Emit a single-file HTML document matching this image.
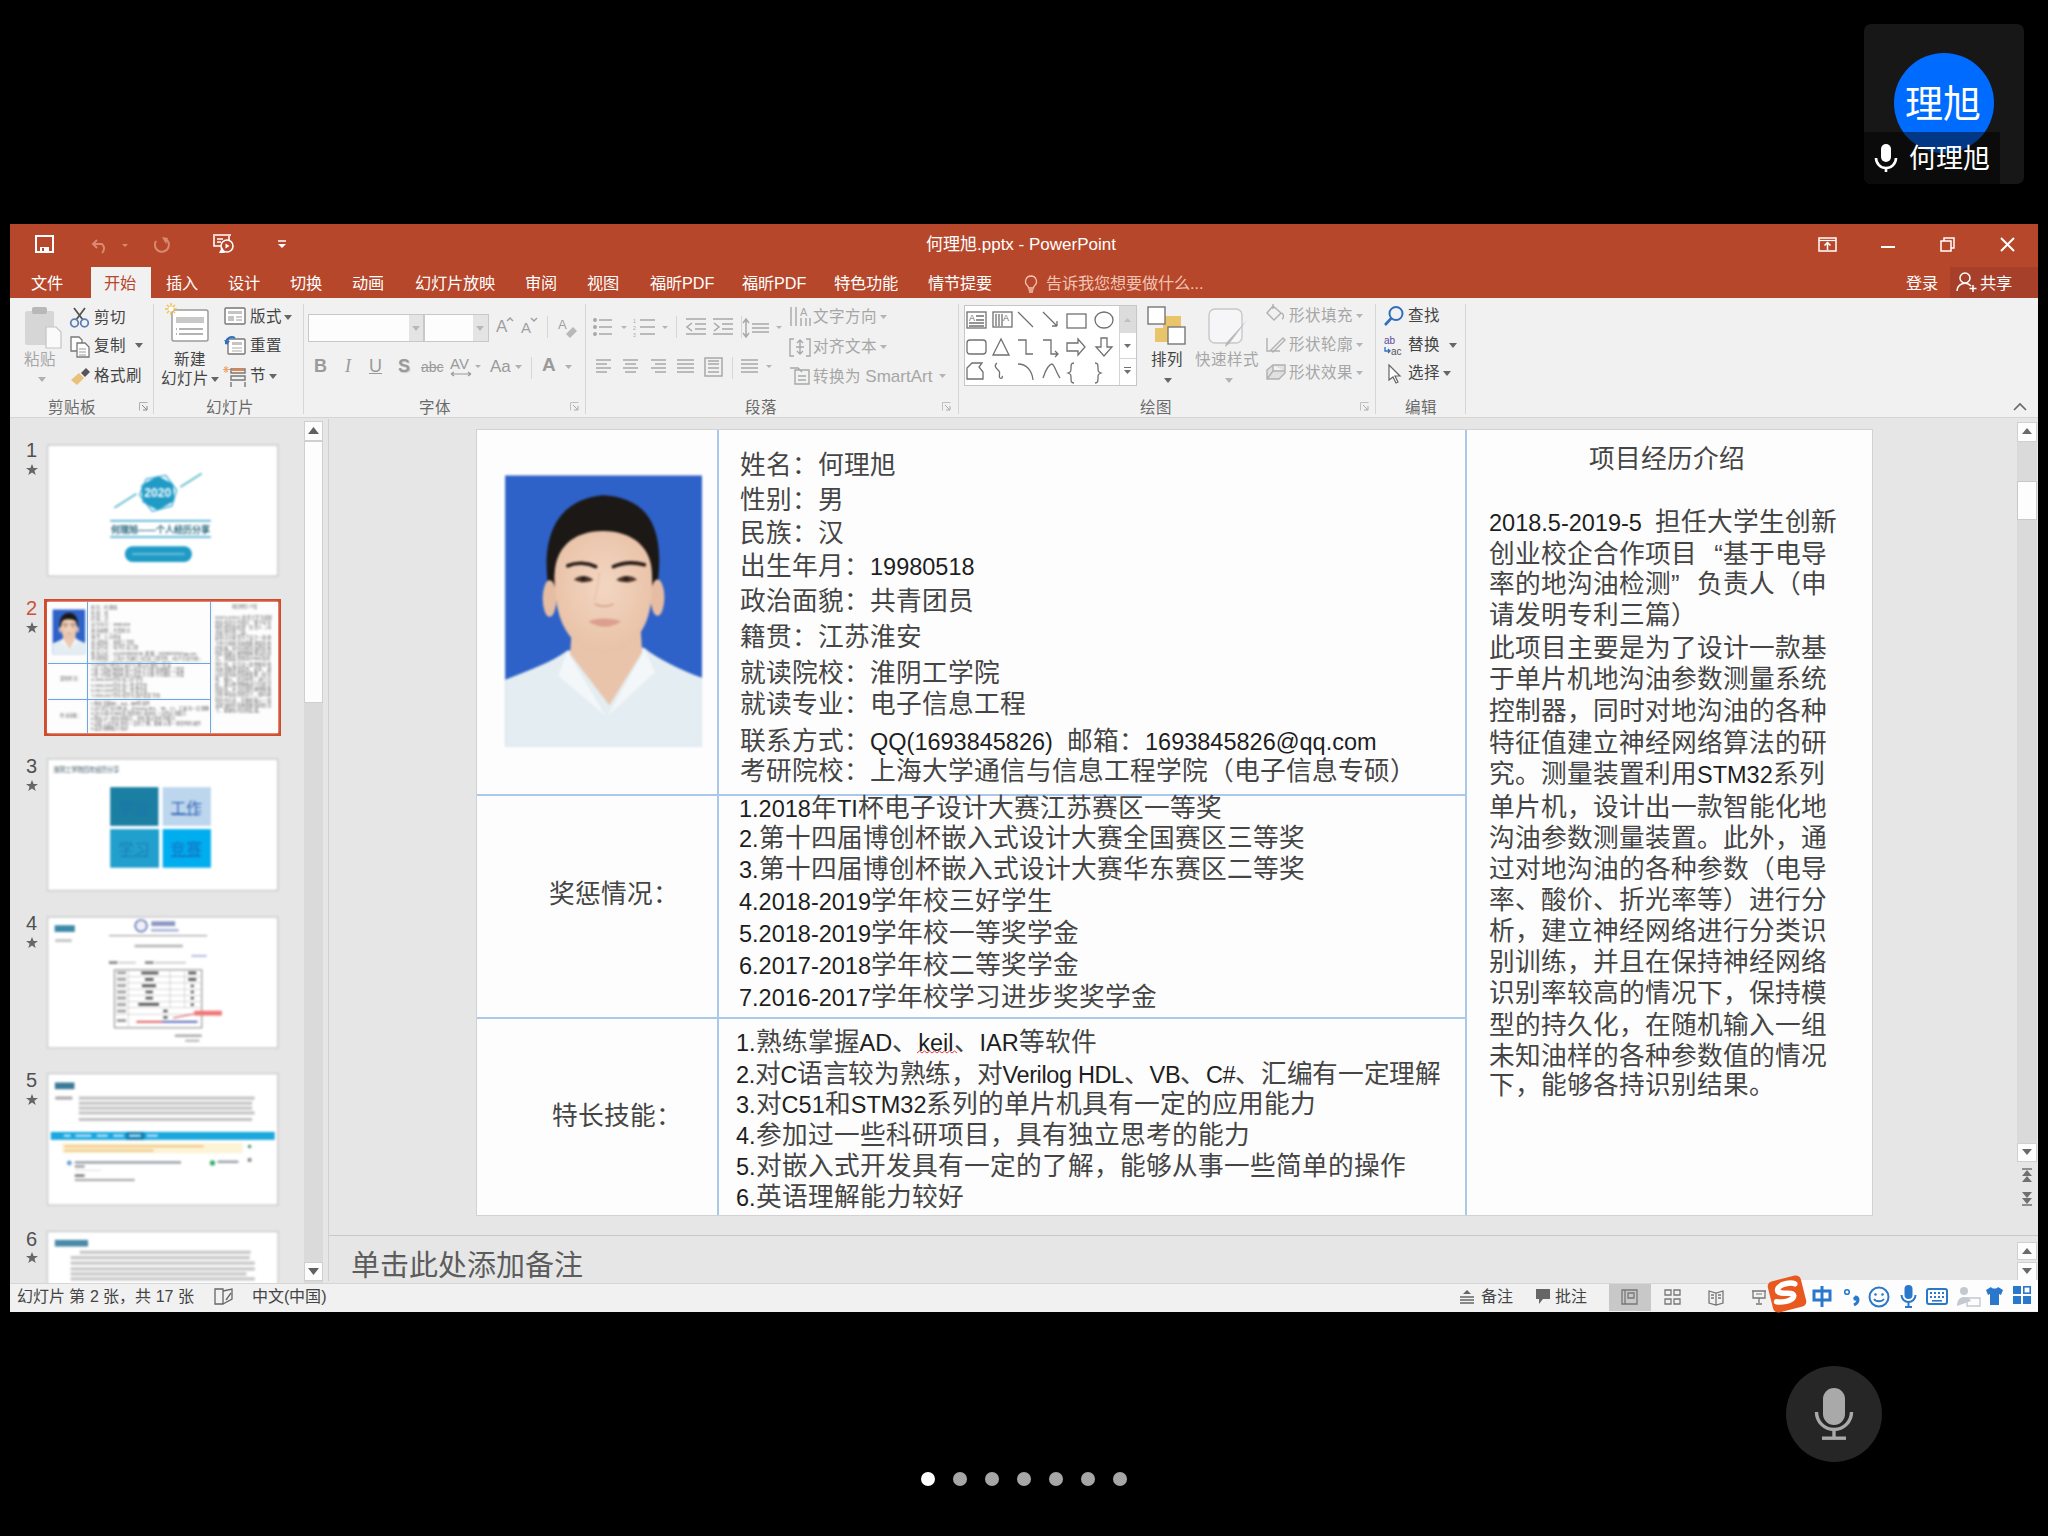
<!DOCTYPE html>
<html lang="zh-CN"><head><meta charset="utf-8">
<style>
*{margin:0;padding:0;box-sizing:border-box}
html,body{width:2048px;height:1536px;overflow:hidden;background:#000;font-family:"Liberation Sans",sans-serif;position:relative}
.a{position:absolute}
.t{position:absolute;white-space:nowrap;line-height:1}
svg{position:absolute;overflow:visible}
.tab{color:#fff;font-size:16.2px}
.rb{color:#444;font-size:15.5px}
.dis{color:#a6a6a6}
.gl{color:#6a6a6a;font-size:15.5px}
.sep{position:absolute;width:1px;background:#d6d6d6}
.sl{color:#454545;font-size:25.7px}
.sl b{font-weight:normal;font-size:23.5px;color:#1e1e1e}
.num{color:#555;font-size:20px}
.star{color:#666;font-size:13px}
.th{position:absolute;background:#fff;border:1px solid #c8c8c8;overflow:hidden}
.rep .t{opacity:.85}
</style></head><body>
<!-- avatar card -->
<div class="a" style="left:1864px;top:24px;width:160px;height:160px;background:#171717;border-radius:7px;overflow:hidden">
  <div class="a" style="left:0;top:108px;width:136px;height:52px;background:#0b0b0b"></div>
  <div class="a" style="left:30px;top:29px;width:100px;height:100px;border-radius:50%;background:#006cff"></div>
  <div class="t" style="left:41px;top:61px;color:#fff;font-size:38px">理旭</div>
  <div class="a" style="left:0;top:108px;width:136px;height:52px;overflow:hidden"><div class="a" style="left:30px;top:-79px;width:100px;height:100px;border-radius:50%;background:rgba(0,0,0,0.48)"></div></div>
  <div class="t" style="left:45px;top:122px;color:#fff;font-size:27px">何理旭</div>
  <svg style="left:10px;top:120px" width="24" height="28" viewBox="0 0 24 28"><rect x="7" y="0" width="10" height="18" rx="5" fill="#fff"/><path d="M2 14 a10 10 0 0 0 20 0" stroke="#fff" stroke-width="2.6" fill="none"/><rect x="10.7" y="23" width="2.6" height="5" fill="#fff"/></svg>
</div>
<!-- window bg -->
<div class="a" style="left:10px;top:224px;width:2028px;height:1088px;background:#e6e6e6"></div>
<div class="a" style="left:10px;top:224px;width:2028px;height:74px;background:#b7472a"></div>
<div class="a" style="left:10px;top:298px;width:2028px;height:120px;background:#f1f1f1;border-bottom:1px solid #d4d4d4"></div>
<div class="a" style="left:328px;top:419px;width:1px;height:862px;background:#d0d0d0"></div>
<div class="a" style="left:329px;top:1235px;width:1709px;height:1px;background:#c8c8c8"></div>
<div class="a" style="left:10px;top:1283px;width:2028px;height:29px;background:#f1f1f1;border-top:1px solid #d6d6d6"></div>

<!-- page dots -->
<div class="a" style="left:921px;top:1472px;width:14px;height:14px;border-radius:50%;background:#fff"></div>
<div class="a" style="left:953px;top:1472px;width:14px;height:14px;border-radius:50%;background:#a6a6a6"></div>
<div class="a" style="left:985px;top:1472px;width:14px;height:14px;border-radius:50%;background:#a6a6a6"></div>
<div class="a" style="left:1017px;top:1472px;width:14px;height:14px;border-radius:50%;background:#a6a6a6"></div>
<div class="a" style="left:1049px;top:1472px;width:14px;height:14px;border-radius:50%;background:#a6a6a6"></div>
<div class="a" style="left:1081px;top:1472px;width:14px;height:14px;border-radius:50%;background:#a6a6a6"></div>
<div class="a" style="left:1113px;top:1472px;width:14px;height:14px;border-radius:50%;background:#a6a6a6"></div>

<!-- mic button -->
<div class="a" style="left:1786px;top:1366px;width:96px;height:96px;border-radius:50%;background:#262626"></div>
<svg style="left:1810px;top:1388px" width="48" height="54" viewBox="0 0 48 54"><rect x="13" y="0" width="22" height="37" rx="11" fill="#a9a9a9"/><path d="M6.5 24 a17.5 17.5 0 0 0 35 0" stroke="#a9a9a9" stroke-width="3.4" fill="none"/><rect x="22.3" y="41" width="3.4" height="8" fill="#a9a9a9"/><rect x="12" y="48.5" width="24" height="3.4" fill="#a9a9a9"/></svg>
<!-- QAT -->
<svg style="left:35px;top:235px" width="19" height="18" viewBox="0 0 19 18"><path d="M1 1h17v16H1z" fill="none" stroke="#fff" stroke-width="2"/><rect x="3" y="2" width="13" height="8" fill="#b7472a"/><rect x="5" y="12" width="9" height="5" fill="#fff"/><rect x="7" y="13" width="2" height="3" fill="#b7472a"/></svg>
<svg style="left:91px;top:236px" width="40" height="18" viewBox="0 0 40 18"><path d="M6 4 L2 8 L6 12 M2 8 H11 a6 6 0 0 1 0 9" fill="none" stroke="#d98a73" stroke-width="2"/><path d="M31 8 l3 3 l3 -3z" fill="#d98a73"/></svg>
<svg style="left:152px;top:236px" width="20" height="18" viewBox="0 0 20 18"><path d="M4 5 A7 7 0 1 0 15 4" fill="none" stroke="#d98a73" stroke-width="2"/><path d="M10 1 l6 1 l-2 6z" fill="#d98a73"/></svg>
<svg style="left:211px;top:234px" width="24" height="20" viewBox="0 0 24 20"><path d="M2 1h18M3 2v10h15V2" fill="none" stroke="#fff" stroke-width="1.6"/><path d="M6 5h6M6 8h4" stroke="#fff" stroke-width="1.4"/><circle cx="16" cy="12" r="6" fill="#b7472a" stroke="#fff" stroke-width="1.6"/><path d="M14.5 9.5 l4 2.5 -4 2.5z" fill="#fff"/><path d="M8 19 l3-6 3 6z" fill="#fff"/></svg>
<svg style="left:277px;top:239px" width="10" height="10" viewBox="0 0 10 10"><path d="M1 2h8" stroke="#fff" stroke-width="1.5"/><path d="M1 5h8l-4 4z" fill="#fff"/></svg>
<div class="t" style="left:926px;top:236px;color:#fff;font-size:17px">何理旭.pptx - PowerPoint</div>
<!-- window controls -->
<svg style="left:1818px;top:237px" width="19" height="15" viewBox="0 0 19 15"><rect x="1" y="1" width="17" height="13" fill="none" stroke="#fff" stroke-width="1.5"/><path d="M1 3.5h17" stroke="#fff" stroke-width="1.2"/><path d="M9.5 13V6M6.5 8.5l3-3 3 3" fill="none" stroke="#fff" stroke-width="1.5"/></svg>
<div class="a" style="left:1881px;top:246px;width:14px;height:2px;background:#fff"></div>
<svg style="left:1940px;top:237px" width="15" height="15" viewBox="0 0 15 15"><rect x="1" y="4" width="10" height="10" fill="none" stroke="#fff" stroke-width="1.5"/><path d="M4 4V1h10v10h-3" fill="none" stroke="#fff" stroke-width="1.5"/></svg>
<svg style="left:2000px;top:237px" width="15" height="15" viewBox="0 0 15 15"><path d="M1 1L14 14M14 1L1 14" stroke="#fff" stroke-width="2"/></svg>
<!-- tabs -->
<div class="a" style="left:91px;top:267px;width:60px;height:31px;background:#f1f1f1"></div>
<div class="t tab" style="left:31px;top:275px">文件</div>
<div class="t tab" style="left:104px;top:275px;color:#b7472a">开始</div>
<div class="t tab" style="left:166px;top:275px">插入</div>
<div class="t tab" style="left:228px;top:275px">设计</div>
<div class="t tab" style="left:290px;top:275px">切换</div>
<div class="t tab" style="left:352px;top:275px">动画</div>
<div class="t tab" style="left:415px;top:275px">幻灯片放映</div>
<div class="t tab" style="left:525px;top:275px">审阅</div>
<div class="t tab" style="left:587px;top:275px">视图</div>
<div class="t tab" style="left:650px;top:275px">福昕PDF</div>
<div class="t tab" style="left:742px;top:275px">福昕PDF</div>
<div class="t tab" style="left:834px;top:275px">特色功能</div>
<div class="t tab" style="left:928px;top:275px">情节提要</div>
<svg style="left:1024px;top:275px" width="14" height="18" viewBox="0 0 14 18"><path d="M7 1a5.5 5.5 0 0 0-3.5 9.7c.8.7 1 1.5 1 2.3h5c0-.8.2-1.6 1-2.3A5.5 5.5 0 0 0 7 1z" fill="none" stroke="#f2c2b2" stroke-width="1.3"/><path d="M4.5 15h5M5 17h4" stroke="#f2c2b2" stroke-width="1.3"/></svg>
<div class="t tab" style="left:1046px;top:275px;color:#f0c4b5">告诉我您想要做什么...</div>
<div class="t tab" style="left:1906px;top:275px">登录</div>
<div class="a" style="left:1950px;top:267px;width:88px;height:31px;background:#a6402a"></div>
<svg style="left:1956px;top:271px" width="22" height="22" viewBox="0 0 22 22"><circle cx="9" cy="7" r="5" fill="none" stroke="#fff" stroke-width="1.5"/><path d="M1 20a8 8 0 0 1 14-5" fill="none" stroke="#fff" stroke-width="1.5"/><path d="M17 14v7M13.5 17.5h7" stroke="#fff" stroke-width="1.5"/></svg>
<div class="t tab" style="left:1980px;top:275px">共享</div>
<!-- ===== ribbon: clipboard ===== -->
<svg style="left:22px;top:305px" width="42" height="45" viewBox="0 0 42 45"><rect x="3" y="6" width="29" height="34" rx="2" fill="#d6d6d6"/><rect x="10" y="2" width="15" height="7" rx="2" fill="#b8b8b8"/><path d="M24 22h10l5 5v16H24z" fill="#fafafa" stroke="#c4c4c4" stroke-width="1.2"/></svg>
<div class="t rb dis" style="left:24px;top:352px">粘贴</div>
<svg style="left:38px;top:377px" width="8" height="5" viewBox="0 0 8 5"><path d="M0 0h8l-4 5z" fill="#b0b0b0"/></svg>
<svg style="left:69px;top:307px" width="21" height="21" viewBox="0 0 21 21"><path d="M5 1l9 12M16 1L7 13" stroke="#555" stroke-width="1.8"/><circle cx="5.5" cy="16" r="3.8" fill="none" stroke="#5b7fb5" stroke-width="1.8"/><circle cx="15.5" cy="16" r="3.8" fill="none" stroke="#5b7fb5" stroke-width="1.8"/></svg>
<div class="t rb" style="left:94px;top:310px">剪切</div>
<svg style="left:69px;top:336px" width="22" height="22" viewBox="0 0 22 22"><path d="M2 1h8l3 3v11H2z" fill="#fff" stroke="#777" stroke-width="1.3"/><path d="M8 7h8l4 4v10H8z" fill="#fff" stroke="#777" stroke-width="1.3"/><path d="M10 13h7M10 16h7M10 19h7" stroke="#999" stroke-width="1"/></svg>
<div class="t rb" style="left:94px;top:338px">复制</div>
<svg style="left:135px;top:343px" width="8" height="5" viewBox="0 0 8 5"><path d="M0 0h8l-4 5z" fill="#666"/></svg>
<svg style="left:70px;top:367px" width="21" height="19" viewBox="0 0 21 19"><path d="M1 13l8-7 5 5-7 7z" fill="#e8c27a"/><path d="M11 6l5-5 4 4-5 5z" fill="#555"/></svg>
<div class="t rb" style="left:94px;top:368px">格式刷</div>
<div class="t gl" style="left:48px;top:399.5px">剪贴板</div>
<svg style="left:139px;top:402px" width="9" height="9" viewBox="0 0 9 9"><path d="M0.5 8.5V0.5h8" fill="none" stroke="#b0b0b0"/><path d="M3 3l5 5M8 4v4H4" fill="none" stroke="#888"/></svg>
<div class="sep" style="left:153px;top:304px;height:110px"></div>

<!-- ===== slides ===== -->
<svg style="left:165px;top:303px" width="46" height="41" viewBox="0 0 46 41"><rect x="7" y="7" width="36" height="31" rx="2" fill="#fff" stroke="#9a9a9a" stroke-width="1.5"/><rect x="11" y="14" width="28" height="6" fill="#c8c8c8"/><path d="M14 26h24M14 31h24" stroke="#9a9a9a" stroke-width="1.3"/><path d="M11 26h1M11 31h1" stroke="#9a9a9a" stroke-width="1.3"/><g stroke="#f0c050" stroke-width="1.4"><path d="M6 0v12M0 6h12M2 2l8 8M10 2l-8 8"/></g><circle cx="6" cy="6" r="2.5" fill="#fff"/></svg>
<div class="t rb" style="left:174px;top:352px">新建</div>
<div class="t rb" style="left:161px;top:371px">幻灯片</div>
<svg style="left:211px;top:377px" width="8" height="5" viewBox="0 0 8 5"><path d="M0 0h8l-4 5z" fill="#666"/></svg>
<svg style="left:224px;top:307px" width="23" height="19" viewBox="0 0 23 19"><rect x="1" y="1" width="20" height="16" rx="1" fill="#fff" stroke="#777" stroke-width="1.4"/><rect x="4" y="4" width="14" height="3" fill="#c4c4c4"/><rect x="4" y="9" width="6" height="5" fill="#c4c4c4"/><path d="M12 10h6M12 13h6" stroke="#999"/></svg>
<div class="t rb" style="left:250px;top:309px">版式</div>
<svg style="left:284px;top:315px" width="8" height="5" viewBox="0 0 8 5"><path d="M0 0h8l-4 5z" fill="#666"/></svg>
<svg style="left:224px;top:335px" width="23" height="21" viewBox="0 0 23 21"><rect x="4" y="4" width="17" height="15" rx="1" fill="#fff" stroke="#777" stroke-width="1.4"/><rect x="8" y="7" width="10" height="3" fill="#c4c4c4"/><path d="M8 13h10M8 16h10" stroke="#aaa"/><path d="M2 9a6 6 0 0 1 9-6" fill="none" stroke="#2f6fc0" stroke-width="2"/><path d="M0 5l3 5 3-4z" fill="#2f6fc0"/></svg>
<div class="t rb" style="left:250px;top:338px">重置</div>
<svg style="left:223px;top:366px" width="24" height="21" viewBox="0 0 24 21"><path d="M8 3h14v4H8zM8 10h14v4H8z" fill="none" stroke="#777" stroke-width="1.4"/><path d="M8 16v5M22 16v5" stroke="#777" stroke-width="1.4"/><path d="M3 0v7M0 3.5h7M1 1l4 5M5 1l-4 5" stroke="#f0a060" stroke-width="1"/><path d="M9 4h12" stroke="#f08040" stroke-width="2"/></svg>
<div class="t rb" style="left:250px;top:368px">节</div>
<svg style="left:269px;top:374px" width="8" height="5" viewBox="0 0 8 5"><path d="M0 0h8l-4 5z" fill="#666"/></svg>
<div class="t gl" style="left:206px;top:399.5px">幻灯片</div>
<div class="sep" style="left:303px;top:304px;height:110px"></div>

<!-- ===== font ===== -->
<div class="a" style="left:308px;top:314px;width:116px;height:28px;background:#fdfdfd;border:1px solid #c8c8c8"></div>
<div class="a" style="left:409px;top:315px;width:14px;height:26px;background:#e4e4e4"></div>
<svg style="left:412px;top:326px" width="8" height="5" viewBox="0 0 8 5"><path d="M0 0h8l-4 5z" fill="#b8b8b8"/></svg>
<div class="a" style="left:424px;top:314px;width:65px;height:28px;background:#fdfdfd;border:1px solid #c8c8c8"></div>
<div class="a" style="left:473px;top:315px;width:15px;height:26px;background:#e4e4e4"></div>
<svg style="left:476px;top:326px" width="8" height="5" viewBox="0 0 8 5"><path d="M0 0h8l-4 5z" fill="#b8b8b8"/></svg>
<div class="t" style="left:496px;top:318px;font-size:17px;color:#a0a0a0">A</div>
<svg style="left:506px;top:317px" width="8" height="5" viewBox="0 0 8 5"><path d="M1 4l3-3 3 3" fill="none" stroke="#a0a0a0" stroke-width="1.5"/></svg>
<div class="t" style="left:521px;top:320px;font-size:15px;color:#a0a0a0">A</div>
<svg style="left:530px;top:317px" width="8" height="5" viewBox="0 0 8 5"><path d="M1 1l3 3 3-3" fill="none" stroke="#a0a0a0" stroke-width="1.5"/></svg>
<div class="sep" style="left:547px;top:316px;height:22px"></div>
<svg style="left:558px;top:317px" width="20" height="22" viewBox="0 0 20 22"><text x="0" y="12" font-family="Liberation Sans" font-size="13" fill="#a0a0a0">A</text><path d="M8 17l7-7 4 4-7 7z" fill="#b8b8b8"/></svg>
<div class="t" style="left:314px;top:357px;font-size:18px;font-weight:bold;color:#9a9a9a">B</div>
<div class="t" style="left:345px;top:357px;font-size:18px;font-style:italic;font-family:'Liberation Serif';color:#9a9a9a">I</div>
<div class="t" style="left:369px;top:357px;font-size:18px;text-decoration:underline;color:#9a9a9a">U</div>
<div class="t" style="left:398px;top:357px;font-size:18px;font-weight:bold;color:#9a9a9a;text-shadow:1px 1px 1px #ccc">S</div>
<div class="t" style="left:421px;top:360px;font-size:14px;text-decoration:line-through;color:#9a9a9a">abc</div>
<svg style="left:450px;top:356px" width="32" height="22" viewBox="0 0 32 22"><text x="0" y="13" font-family="Liberation Sans" font-size="15" fill="#9a9a9a">AV</text><path d="M1 18h20M1 18l3-2M1 18l3 2M21 18l-3-2M21 18l-3 2" stroke="#9a9a9a" stroke-width="1.2"/><path d="M25 9h6l-3 3z" fill="#b0b0b0"/></svg>
<div class="t" style="left:490px;top:358px;font-size:17px;color:#9a9a9a">Aa</div>
<svg style="left:515px;top:365px" width="7" height="4" viewBox="0 0 7 4"><path d="M0 0h7l-3.5 4z" fill="#b0b0b0"/></svg>
<div class="sep" style="left:531px;top:357px;height:22px"></div>
<div class="t" style="left:542px;top:355px;font-size:19px;font-weight:bold;color:#9a9a9a">A</div>
<svg style="left:565px;top:365px" width="7" height="4" viewBox="0 0 7 4"><path d="M0 0h7l-3.5 4z" fill="#b0b0b0"/></svg>
<div class="t gl" style="left:419px;top:399.5px">字体</div>
<svg style="left:570px;top:402px" width="9" height="9" viewBox="0 0 9 9"><path d="M0.5 8.5V0.5h8" fill="none" stroke="#c0c0c0"/><path d="M3 3l5 5M8 4v4H4" fill="none" stroke="#aaa"/></svg>
<div class="sep" style="left:585px;top:304px;height:110px"></div>

<!-- ===== paragraph ===== -->
<svg style="left:593px;top:317px" width="190" height="22" viewBox="0 0 190 22" fill="none" stroke="#a8a8a8" stroke-width="1.5">
<circle cx="2" cy="3" r="1.2" fill="#a8a8a8"/><circle cx="2" cy="10" r="1.2" fill="#a8a8a8"/><circle cx="2" cy="17" r="1.2" fill="#a8a8a8"/><path d="M6 3h13M6 10h13M6 17h13"/>
<path d="M28 9h6l-3 3z" fill="#b4b4b4" stroke="none"/>
<path d="M47 3h15M47 10h15M47 17h15"/><text x="40" y="6" font-size="5" fill="#a8a8a8" stroke="none">1</text><text x="40" y="13" font-size="5" fill="#a8a8a8" stroke="none">2</text><text x="40" y="20" font-size="5" fill="#a8a8a8" stroke="none">3</text>
<path d="M69 9h6l-3 3z" fill="#b4b4b4" stroke="none"/>
<path d="M93 2h20M102 7h11M102 12h11M93 17h20M99 6l-5 4 5 4"/>
<path d="M120 2h20M129 7h11M129 12h11M120 17h20M121 6l5 4-5 4"/>
<path d="M159 7h17M159 11h17M159 15h17M153 3v16M150 6l3-4 3 4M150 16l3 4 3-4"/>
<path d="M183 9h6l-3 3z" fill="#b4b4b4" stroke="none"/>
</svg>
<div class="sep" style="left:676px;top:316px;height:22px"></div>
<div class="sep" style="left:741px;top:316px;height:22px"></div>
<svg style="left:594px;top:356px" width="180" height="22" viewBox="0 0 180 22" fill="none" stroke="#a8a8a8" stroke-width="1.5">
<path d="M2 4h15M2 8h11M2 12h15M2 16h11"/>
<path d="M29 4h15M31 8h11M29 12h15M31 16h11"/>
<path d="M57 4h15M61 8h11M57 12h15M61 16h11"/>
<path d="M83 4h17M83 8h17M83 12h17M83 16h17"/>
<path d="M111 2h17v18H111z M114 8h11M114 12h11M114 16h11M114 5h11"/>
<path d="M147 4h17M147 8h17M147 12h17M147 16h17"/>
<path d="M172 9h6l-3 3z" fill="#b4b4b4" stroke="none"/>
</svg>
<div class="sep" style="left:732px;top:357px;height:22px"></div>
<svg style="left:789px;top:306px" width="24" height="80" viewBox="0 0 24 80" fill="none" stroke="#a8a8a8" stroke-width="1.4">
<path d="M2 1v19M7 1v19M12 12v8M17 12v8M21 12v8"/><text x="11" y="10" font-size="11" fill="#a8a8a8" stroke="none" font-family="Liberation Sans">A</text>
<path d="M5 33H1v17h4M17 33h4v17h-4M7 41h8M11 34v14M8 37l3-3 3 3M8 45l3 3 3-3"/>
<path d="M1 62h8l4 4v0M6 64h14v14H6z M9 70h8M9 74h8"/>
</svg>
<div class="t rb dis" style="left:813px;top:309px">文字方向</div>
<svg style="left:880px;top:315px" width="7" height="4" viewBox="0 0 7 4"><path d="M0 0h7l-3.5 4z" fill="#b4b4b4"/></svg>
<div class="t rb dis" style="left:813px;top:339px">对齐文本</div>
<svg style="left:880px;top:345px" width="7" height="4" viewBox="0 0 7 4"><path d="M0 0h7l-3.5 4z" fill="#b4b4b4"/></svg>
<div class="t rb dis" style="left:813px;top:368px">转换为 <span style="font-size:17px">SmartArt</span></div>
<svg style="left:939px;top:374px" width="7" height="4" viewBox="0 0 7 4"><path d="M0 0h7l-3.5 4z" fill="#b4b4b4"/></svg>
<div class="t gl" style="left:745px;top:399.5px">段落</div>
<svg style="left:942px;top:402px" width="9" height="9" viewBox="0 0 9 9"><path d="M0.5 8.5V0.5h8" fill="none" stroke="#c0c0c0"/><path d="M3 3l5 5M8 4v4H4" fill="none" stroke="#aaa"/></svg>
<div class="sep" style="left:958px;top:304px;height:110px"></div>

<!-- ===== drawing ===== -->
<div class="a" style="left:964px;top:305px;width:173px;height:81px;background:#fff;border:1px solid #c6c6c6"></div>
<div class="a" style="left:1119px;top:306px;width:17px;height:27px;background:#dcdcdc"></div>
<div class="a" style="left:1119px;top:306px;width:1px;height:79px;background:#d4d4d4"></div>
<div class="a" style="left:1120px;top:358px;width:16px;height:1px;background:#d4d4d4"></div>
<svg style="left:1124px;top:318px" width="7" height="4" viewBox="0 0 7 4"><path d="M0 4h7l-3.5-4z" fill="#c0c0c0"/></svg>
<svg style="left:1124px;top:344px" width="7" height="4" viewBox="0 0 7 4"><path d="M0 0h7l-3.5 4z" fill="#707070"/></svg>
<svg style="left:1124px;top:367px" width="7" height="8" viewBox="0 0 7 8"><path d="M0 0.5h7" stroke="#707070"/><path d="M0 3h7l-3.5 4z" fill="#707070"/></svg>
<svg style="left:964px;top:305px" width="155" height="80" viewBox="0 0 155 80" fill="none" stroke="#707070" stroke-width="1.3">
<rect x="3" y="7" width="19" height="16"/><path d="M12 11h8M12 15h8M5 18h15M5 21h15"/><text x="5" y="16" font-size="9" fill="#707070" stroke="none" font-family="Liberation Sans">A</text>
<rect x="29" y="7" width="19" height="15"/><path d="M32 9v12M35 9v12M38 9v12"/><text x="39" y="16" font-size="9" fill="#707070" stroke="none" font-family="Liberation Sans">A</text>
<path d="M54 7l15 15"/>
<path d="M79 7l14 14M93 21v-5M93 21h-5"/>
<rect x="103" y="9" width="19" height="14"/>
<ellipse cx="140" cy="15" rx="9" ry="8"/>
<rect x="3" y="35" width="19" height="14" rx="3"/>
<path d="M37 34l-8 16h16z"/>
<path d="M54 35h8v14h7"/>
<path d="M79 35h8v14h7M91 46l3 3-3 3"/>
<path d="M103 38h11v-4l7 8-7 8v-4h-11z"/>
<path d="M137 33h6v9h5l-8 9-8-9h5z"/>
<path d="M3 63l5-5h10l-3 4 4 5v7H3z"/>
<path d="M33 58c-4 3 0 6 2 8s-1 5 1 7c2 1 3-1 2-2"/>
<path d="M54 59c8 0 14 6 15 16"/>
<path d="M79 73c3-10 7-14 9-14s5 10 8 14"/>
<path d="M110 58c-3 0-3 2-3 5s0 4-3 5c3 1 3 2 3 5s0 5 3 5"/>
<path d="M131 58c3 0 3 2 3 5s0 4 3 5c-3 1-3 2-3 5s0 5-3 5"/>
</svg>
<svg style="left:1147px;top:306px" width="40" height="40" viewBox="0 0 40 40"><rect x="16" y="10" width="18" height="18" fill="#e9c46a"/><rect x="8" y="22" width="14" height="14" fill="#e9c46a"/><rect x="1" y="1" width="17" height="17" fill="#fff" stroke="#777" stroke-width="1.4"/><rect x="21" y="21" width="17" height="17" fill="#fff" stroke="#777" stroke-width="1.4"/></svg>
<div class="t rb" style="left:1151px;top:352px">排列</div>
<svg style="left:1164px;top:378px" width="8" height="5" viewBox="0 0 8 5"><path d="M0 0h8l-4 5z" fill="#666"/></svg>
<svg style="left:1207px;top:306px" width="44" height="44" viewBox="0 0 44 44"><rect x="2" y="3" width="33" height="34" rx="6" fill="#f6f6f8" stroke="#c8c8c8" stroke-width="1.4"/><path d="M40 14l-18 24-4 3 1-4z" fill="#b8b8b8"/></svg>
<div class="t rb dis" style="left:1195px;top:352px">快速样式</div>
<svg style="left:1225px;top:378px" width="8" height="5" viewBox="0 0 8 5"><path d="M0 0h8l-4 5z" fill="#b4b4b4"/></svg>
<svg style="left:1264px;top:303px" width="24" height="80" viewBox="0 0 24 80" fill="none" stroke="#b0b0b0" stroke-width="1.4">
<path d="M9 3l-6 7 7 7 7-7zM9 1v5M18 10c2 2 2 5 0 6"/>
<path d="M3 35v13h13M7 47l12-12 2 2-12 12z"/>
<path d="M3 67l6-5h12v8l-6 6H3z M9 62v6h12M9 68l-6 8" fill="#e0e0e0"/>
</svg>
<div class="t rb dis" style="left:1289px;top:308px">形状填充</div>
<svg style="left:1356px;top:314px" width="7" height="4" viewBox="0 0 7 4"><path d="M0 0h7l-3.5 4z" fill="#b4b4b4"/></svg>
<div class="t rb dis" style="left:1289px;top:337px">形状轮廓</div>
<svg style="left:1356px;top:343px" width="7" height="4" viewBox="0 0 7 4"><path d="M0 0h7l-3.5 4z" fill="#b4b4b4"/></svg>
<div class="t rb dis" style="left:1289px;top:365px">形状效果</div>
<svg style="left:1356px;top:371px" width="7" height="4" viewBox="0 0 7 4"><path d="M0 0h7l-3.5 4z" fill="#b4b4b4"/></svg>
<div class="t gl" style="left:1140px;top:399.5px">绘图</div>
<svg style="left:1360px;top:402px" width="9" height="9" viewBox="0 0 9 9"><path d="M0.5 8.5V0.5h8" fill="none" stroke="#c0c0c0"/><path d="M3 3l5 5M8 4v4H4" fill="none" stroke="#aaa"/></svg>
<div class="sep" style="left:1375px;top:304px;height:110px"></div>

<!-- ===== editing ===== -->
<svg style="left:1383px;top:305px" width="22" height="22" viewBox="0 0 22 22"><circle cx="13" cy="8.5" r="6.5" fill="none" stroke="#2f6fc0" stroke-width="2"/><path d="M8.5 13L2 20" stroke="#2f6fc0" stroke-width="2.6"/></svg>
<div class="t rb" style="left:1408px;top:308px">查找</div>
<svg style="left:1383px;top:335px" width="24" height="22" viewBox="0 0 24 22"><text x="1" y="9" font-family="Liberation Sans" font-size="10" fill="#5a4aa0">ab</text><text x="8" y="20" font-family="Liberation Sans" font-size="10" fill="#555">ac</text><path d="M2 12v4h5M5 14l2 2-2 2" fill="none" stroke="#2f6fc0" stroke-width="1.3"/></svg>
<div class="t rb" style="left:1408px;top:337px">替换</div>
<svg style="left:1449px;top:343px" width="8" height="5" viewBox="0 0 8 5"><path d="M0 0h8l-4 5z" fill="#666"/></svg>
<svg style="left:1388px;top:364px" width="14" height="20" viewBox="0 0 14 20"><path d="M1 1v15l4-3 3 6 2-1-3-6h5z" fill="#fff" stroke="#666" stroke-width="1.2"/></svg>
<div class="t rb" style="left:1408px;top:365px">选择</div>
<svg style="left:1443px;top:371px" width="8" height="5" viewBox="0 0 8 5"><path d="M0 0h8l-4 5z" fill="#666"/></svg>
<div class="t gl" style="left:1405px;top:399.5px">编辑</div>
<div class="sep" style="left:1465px;top:304px;height:110px"></div>
<svg style="left:2013px;top:402px" width="14" height="9" viewBox="0 0 14 9"><path d="M1 8l6-6 6 6" fill="none" stroke="#666" stroke-width="1.6"/></svg>
<!-- ===== slide ===== -->
<div class="a" style="left:477px;top:430px;width:1395px;height:785px;background:#fdfdfd;box-shadow:0 0 0 1px #d2d2d2;overflow:hidden">
<div class="a" style="left:240px;top:0;width:1.5px;height:785px;background:#a9c8ea"></div>
<div class="a" style="left:988px;top:0;width:1.5px;height:785px;background:#a9c8ea"></div>
<div class="a" style="left:0;top:364px;width:989px;height:1.5px;background:#a9c8ea"></div>
<div class="a" style="left:0;top:587px;width:989px;height:1.5px;background:#a9c8ea"></div>
<svg style="left:23px;top:40px;filter:blur(0.9px)" width="210" height="280" viewBox="0 0 1152 1536">
<defs><radialGradient id="sk" cx="0.5" cy="0.45" r="0.6"><stop offset="0" stop-color="#f3d6c2"/><stop offset="1" stop-color="#e8c0a5"/></radialGradient></defs>
<rect x="28" y="30" width="1080" height="1485" fill="#2e62c9"/>
<path d="M28 1150 C160 1100 290 1050 370 990 L790 975 C870 1040 1000 1100 1108 1140 L1108 1515 L28 1515 Z" fill="#e4edf1"/>
<path d="M395 850 L770 850 L780 1000 L600 1290 L385 1010 Z" fill="#e9c4ab"/>
<path d="M370 990 L320 1130 L580 1350 L390 1030 Z" fill="#f3f7f9"/>
<path d="M790 975 L850 1110 L590 1350 L770 1030 Z" fill="#f3f7f9"/>
<path d="M262 620 C232 380 300 165 560 138 C822 148 900 330 866 610 L866 660 L262 660 Z" fill="#1c1816"/>
<ellipse cx="272" cy="705" rx="38" ry="100" fill="#e6bca2"/>
<ellipse cx="864" cy="700" rx="38" ry="100" fill="#e6bca2"/>
<path d="M300 580 C300 430 400 335 565 335 C730 335 838 430 834 580 C840 740 815 850 740 930 C680 990 620 1008 570 1008 C520 1008 460 990 400 930 C325 850 300 740 298 560 Z" fill="url(#sk)"/>

<path d="M372 525 C420 505 480 508 525 530" stroke="#2a1e18" stroke-width="20" fill="none" stroke-linecap="round"/>
<path d="M622 530 C680 505 740 505 792 520" stroke="#2a1e18" stroke-width="20" fill="none" stroke-linecap="round"/>
<path d="M405 600 C440 575 480 575 512 603 C475 620 440 620 405 600 Z" fill="#4a3428"/><circle cx="458" cy="597" r="13" fill="#2a1c16"/>
<path d="M638 603 C670 575 715 575 752 600 C715 620 675 620 638 603 Z" fill="#4a3428"/><circle cx="692" cy="597" r="13" fill="#2a1c16"/>
<path d="M520 735 C545 752 595 752 622 735" stroke="#d6a68c" stroke-width="10" fill="none"/><path d="M545 560 C540 620 530 680 515 720" stroke="#ebc4ab" stroke-width="10" fill="none"/>
<path d="M485 830 C540 810 600 810 665 830 C610 870 540 870 485 830 Z" fill="#dc9f8e"/>
</svg>
<div class="t sl" style="left:263.0px;top:22.6px">姓名：何理旭</div>
<div class="t sl" style="left:263.0px;top:57.6px">性别：男</div>
<div class="t sl" style="left:263.0px;top:91.1px">民族：汉</div>
<div class="t sl" style="left:263.0px;top:123.6px">出生年月：<b>19980518</b></div>
<div class="t sl" style="left:263.0px;top:159.1px">政治面貌：共青团员</div>
<div class="t sl" style="left:263.0px;top:194.6px">籍贯：江苏淮安</div>
<div class="t sl" style="left:263.0px;top:230.6px">就读院校：淮阴工学院</div>
<div class="t sl" style="left:263.0px;top:261.6px">就读专业：电子信息工程</div>
<div class="t sl" style="left:263.0px;top:299.3px">联系方式：<b>QQ(1693845826)</b></div>
<div class="t sl" style="left:263.0px;top:329.2px">考研院校：上海大学通信与信息工程学院（电子信息专硕）</div>
<div class="t sl" style="left:590.0px;top:299.3px">邮箱：<b>1693845826@qq.com</b></div>
<div class="t sl" style="left:262.0px;top:365.6px"><b>1.2018</b>年<b>TI</b>杯电子设计大赛江苏赛区一等奖</div>
<div class="t sl" style="left:262.0px;top:396.2px"><b>2.</b>第十四届博创杯嵌入式设计大赛全国赛区三等奖</div>
<div class="t sl" style="left:262.0px;top:427.0px"><b>3.</b>第十四届博创杯嵌入式设计大赛华东赛区二等奖</div>
<div class="t sl" style="left:262.0px;top:459.2px"><b>4.2018-2019</b>学年校三好学生</div>
<div class="t sl" style="left:262.0px;top:490.6px"><b>5.2018-2019</b>学年校一等奖学金</div>
<div class="t sl" style="left:262.0px;top:522.6px"><b>6.2017-2018</b>学年校二等奖学金</div>
<div class="t sl" style="left:262.0px;top:554.6px"><b>7.2016-2017</b>学年校学习进步奖奖学金</div>
<div class="t sl" style="left:259.0px;top:599.6px"><b>1.</b>熟练掌握<b>AD</b>、<b>keil</b>、<b>IAR</b>等软件</div>
<div class="t sl" style="left:259.0px;top:631.6px;letter-spacing:-0.35px"><b>2.</b>对<b>C</b>语言较为熟练，对<b>Verilog HDL</b>、<b>VB</b>、<b>C#</b>、汇编有一定理解</div>
<div class="t sl" style="left:259.0px;top:662.1px"><b>3.</b>对<b>C51</b>和<b>STM32</b>系列的单片机具有一定的应用能力</div>
<div class="t sl" style="left:259.0px;top:692.6px"><b>4.</b>参加过一些科研项目，具有独立思考的能力</div>
<div class="t sl" style="left:259.0px;top:723.6px"><b>5.</b>对嵌入式开发具有一定的了解，能够从事一些简单的操作</div>
<div class="t sl" style="left:259.0px;top:754.6px"><b>6.</b>英语理解能力较好</div>
<div class="t sl" style="left:72.0px;top:452.1px">奖惩情况：</div>
<div class="t sl" style="left:75.0px;top:674.0px">特长技能：</div>
<div class="t sl" style="left:1112.0px;top:16.9px">项目经历介绍</div>
<div class="t sl" style="left:1012.0px;top:79.6px"><b>2018.5-2019-5&nbsp;&nbsp;</b>担任大学生创新</div>
<div class="t sl" style="left:1012.0px;top:111.6px">创业校企合作项目<i style="display:inline-block;width:25.7px;font-style:normal;text-align:right">“</i>基于电导</div>
<div class="t sl" style="left:1012.0px;top:142.1px">率的地沟油检测<i style="display:inline-block;width:25.7px;font-style:normal;text-align:left">”</i>负责人（申</div>
<div class="t sl" style="left:1012.0px;top:173.1px">请发明专利三篇）</div>
<div class="t sl" style="left:1012.0px;top:205.6px">此项目主要是为了设计一款基</div>
<div class="t sl" style="left:1012.0px;top:237.1px">于单片机地沟油参数测量系统</div>
<div class="t sl" style="left:1012.0px;top:269.1px">控制器，同时对地沟油的各种</div>
<div class="t sl" style="left:1012.0px;top:301.1px">特征值建立神经网络算法的研</div>
<div class="t sl" style="left:1012.0px;top:332.4px">究。测量装置利用<b>STM32</b>系列</div>
<div class="t sl" style="left:1012.0px;top:364.6px">单片机，设计出一款智能化地</div>
<div class="t sl" style="left:1012.0px;top:395.6px">沟油参数测量装置。此外，通</div>
<div class="t sl" style="left:1012.0px;top:426.6px">过对地沟油的各种参数（电导</div>
<div class="t sl" style="left:1012.0px;top:457.6px">率、酸价、折光率等）进行分</div>
<div class="t sl" style="left:1012.0px;top:488.6px">析，建立神经网络进行分类识</div>
<div class="t sl" style="left:1012.0px;top:519.6px">别训练，并且在保持神经网络</div>
<div class="t sl" style="left:1012.0px;top:550.6px">识别率较高的情况下，保持模</div>
<div class="t sl" style="left:1012.0px;top:582.6px">型的持久化，在随机输入一组</div>
<div class="t sl" style="left:1012.0px;top:613.6px">未知油样的各种参数值的情况</div>
<div class="t sl" style="left:1012.0px;top:643.2px">下，能够各持识别结果。</div>
<svg style="left:440px;top:621px" width="40" height="4" viewBox="0 0 40 4"><path d="M0 2 l2.5-2 2.5 2 2.5-2 2.5 2 2.5-2 2.5 2 2.5-2 2.5 2 2.5-2 2.5 2 2.5-2 2.5 2 2.5-2 2.5 2 2.5-2 2.5 2" fill="none" stroke="#e04040" stroke-width="1"/></svg>
</div>
<!-- ===== thumbnail panel ===== -->
<div class="a" style="left:10px;top:419px;width:318px;height:864px;overflow:hidden">
<div class="t num" style="left:16px;top:21px;color:#505050">1</div>
<svg style="left:16px;top:45px" width="12" height="12" viewBox="0 0 12 12"><path d="M6 0l1.6 4.1H12L8.4 6.8 9.7 11 6 8.4 2.3 11l1.3-4.2L0 4.1h4.4z" fill="#666"/></svg>
<div class="t num" style="left:16px;top:179px;color:#c9533a">2</div>
<svg style="left:16px;top:202.5px" width="12" height="12" viewBox="0 0 12 12"><path d="M6 0l1.6 4.1H12L8.4 6.8 9.7 11 6 8.4 2.3 11l1.3-4.2L0 4.1h4.4z" fill="#666"/></svg>
<div class="t num" style="left:16px;top:337px;color:#505050">3</div>
<svg style="left:16px;top:360.5px" width="12" height="12" viewBox="0 0 12 12"><path d="M6 0l1.6 4.1H12L8.4 6.8 9.7 11 6 8.4 2.3 11l1.3-4.2L0 4.1h4.4z" fill="#666"/></svg>
<div class="t num" style="left:16px;top:494px;color:#505050">4</div>
<svg style="left:16px;top:518px" width="12" height="12" viewBox="0 0 12 12"><path d="M6 0l1.6 4.1H12L8.4 6.8 9.7 11 6 8.4 2.3 11l1.3-4.2L0 4.1h4.4z" fill="#666"/></svg>
<div class="t num" style="left:16px;top:651px;color:#505050">5</div>
<svg style="left:16px;top:675px" width="12" height="12" viewBox="0 0 12 12"><path d="M6 0l1.6 4.1H12L8.4 6.8 9.7 11 6 8.4 2.3 11l1.3-4.2L0 4.1h4.4z" fill="#666"/></svg>
<div class="t num" style="left:16px;top:810px;color:#505050">6</div>
<svg style="left:16px;top:833px" width="12" height="12" viewBox="0 0 12 12"><path d="M6 0l1.6 4.1H12L8.4 6.8 9.7 11 6 8.4 2.3 11l1.3-4.2L0 4.1h4.4z" fill="#666"/></svg>
</div>
<div class="a" style="left:304px;top:421px;width:19px;height:862px;background:#dadada"></div>
<div class="a" style="left:304px;top:421px;width:19px;height:20px;background:#fdfdfd;border:1px solid #cfcfcf"></div>
<svg style="left:308px;top:427px" width="11" height="7" viewBox="0 0 11 7"><path d="M0 7h11L5.5 0z" fill="#606060"/></svg>
<div class="a" style="left:304px;top:441px;width:19px;height:262px;background:#fdfdfd;border:1px solid #cfcfcf"></div>
<div class="a" style="left:304px;top:1262px;width:19px;height:19px;background:#fdfdfd;border:1px solid #cfcfcf"></div>
<svg style="left:308px;top:1268px" width="11" height="7" viewBox="0 0 11 7"><path d="M0 0h11L5.5 7z" fill="#606060"/></svg>
<svg style="left:40px;top:440px;filter:blur(0.9px)" width="250" height="140" viewBox="0 0 2048 1147">
<rect x="62" y="42" width="1886" height="1073" fill="#fff" stroke="#c6c6c6" stroke-width="10"/>
<path d="M610 555L790 440M1150 385L1325 275" stroke="#5cbac8" stroke-width="14"/>
<polygon points="965,295 1090,360 1100,500 965,575 840,510 830,370" fill="#1f9bc6"/>
<polygon points="1030,290 1120,410 1080,540 920,585 815,450 870,320" fill="none" stroke="#3aa9d0" stroke-width="10"/>
<text x="965" y="470" text-anchor="middle" font-family="Liberation Sans" font-weight="bold" font-size="100" fill="#fff">2020</text>
<path d="M575 662H1400M575 795H1400" stroke="#3aa7d0" stroke-width="12"/>
<text x="985" y="760" text-anchor="middle" font-size="74" font-weight="bold" fill="#2c6a80">何理旭——个人经历分享</text>
<rect x="695" y="870" width="550" height="130" rx="65" fill="#1f9bc6"/>
<rect x="755" y="925" width="430" height="18" fill="#bfe3f0" opacity="0.45"/>
</svg>
<div class="a" style="left:44px;top:599px;width:237px;height:137px;border:3.4px solid #cf4b2c;background:#fff"></div>
<div class="a" style="left:47.5px;top:602.4px;width:230.2px;height:130.4px;overflow:hidden;background:#fdfdfd;filter:blur(0.8px)">
<div class="a rep" style="left:0;top:0;width:1395px;height:785px;transform:scale(0.1651);transform-origin:0 0">

<div class="a" style="left:240px;top:0;width:1.5px;height:785px;background:#a9c8ea"></div>
<div class="a" style="left:988px;top:0;width:1.5px;height:785px;background:#a9c8ea"></div>
<div class="a" style="left:0;top:364px;width:989px;height:1.5px;background:#a9c8ea"></div>
<div class="a" style="left:0;top:587px;width:989px;height:1.5px;background:#a9c8ea"></div>
<svg style="left:23px;top:40px" width="210" height="280" viewBox="0 0 1152 1536">
<defs><radialGradient id="sk2" cx="0.5" cy="0.45" r="0.6"><stop offset="0" stop-color="#f3d6c2"/><stop offset="1" stop-color="#e8c0a5"/></radialGradient></defs>
<rect x="28" y="30" width="1080" height="1485" fill="#2e62c9"/>
<path d="M28 1150 C160 1100 290 1050 370 990 L790 975 C870 1040 1000 1100 1108 1140 L1108 1515 L28 1515 Z" fill="#e4edf1"/>
<path d="M370 860 L790 860 L790 1000 L600 1340 L370 1010 Z" fill="#eccab4"/>
<path d="M370 990 L320 1130 L580 1350 L390 1030 Z" fill="#f3f7f9"/>
<path d="M790 975 L850 1110 L590 1350 L770 1030 Z" fill="#f3f7f9"/>
<ellipse cx="272" cy="705" rx="38" ry="100" fill="#e6bca2"/>
<ellipse cx="864" cy="700" rx="38" ry="100" fill="#e6bca2"/>
<path d="M298 560 C295 420 400 330 565 330 C730 330 840 420 836 560 C840 740 810 870 720 950 C650 1010 490 1010 420 950 C330 870 300 740 298 560 Z" fill="url(#sk2)"/>
<path d="M262 610 C240 360 330 160 560 140 C790 150 890 320 864 600 L832 560 C830 470 800 400 740 380 C660 350 470 340 390 380 C330 420 315 490 300 610 Z" fill="#1c1816"/>
<path d="M372 525 C420 505 480 508 525 530" stroke="#2a1e18" stroke-width="20" fill="none" stroke-linecap="round"/>
<path d="M622 530 C680 505 740 505 792 520" stroke="#2a1e18" stroke-width="20" fill="none" stroke-linecap="round"/>
<path d="M405 600 C440 580 480 580 510 605 C475 615 440 615 405 600 Z" fill="#5a3e30"/>
<path d="M640 605 C670 580 715 580 750 600 C715 615 675 615 640 605 Z" fill="#5a3e30"/>
<path d="M520 735 C545 752 595 752 622 735" stroke="#d6a68c" stroke-width="10" fill="none"/><path d="M545 560 C540 620 530 680 515 720" stroke="#ebc4ab" stroke-width="10" fill="none"/>
<path d="M485 830 C540 810 600 810 665 830 C610 870 540 870 485 830 Z" fill="#dc9f8e"/>
</svg>
<div class="t sl" style="left:263.0px;top:22.6px">姓名：何理旭</div>
<div class="t sl" style="left:263.0px;top:57.6px">性别：男</div>
<div class="t sl" style="left:263.0px;top:91.1px">民族：汉</div>
<div class="t sl" style="left:263.0px;top:123.6px">出生年月：<b>19980518</b></div>
<div class="t sl" style="left:263.0px;top:159.1px">政治面貌：共青团员</div>
<div class="t sl" style="left:263.0px;top:194.6px">籍贯：江苏淮安</div>
<div class="t sl" style="left:263.0px;top:230.6px">就读院校：淮阴工学院</div>
<div class="t sl" style="left:263.0px;top:261.6px">就读专业：电子信息工程</div>
<div class="t sl" style="left:263.0px;top:299.3px">联系方式：<b>QQ(1693845826)</b></div>
<div class="t sl" style="left:263.0px;top:329.2px">考研院校：上海大学通信与信息工程学院（电子信息专硕）</div>
<div class="t sl" style="left:590.0px;top:299.3px">邮箱：<b>1693845826@qq.com</b></div>
<div class="t sl" style="left:262.0px;top:365.6px"><b>1.2018</b>年<b>TI</b>杯电子设计大赛江苏赛区一等奖</div>
<div class="t sl" style="left:262.0px;top:396.2px"><b>2.</b>第十四届博创杯嵌入式设计大赛全国赛区三等奖</div>
<div class="t sl" style="left:262.0px;top:427.0px"><b>3.</b>第十四届博创杯嵌入式设计大赛华东赛区二等奖</div>
<div class="t sl" style="left:262.0px;top:459.2px"><b>4.2018-2019</b>学年校三好学生</div>
<div class="t sl" style="left:262.0px;top:490.6px"><b>5.2018-2019</b>学年校一等奖学金</div>
<div class="t sl" style="left:262.0px;top:522.6px"><b>6.2017-2018</b>学年校二等奖学金</div>
<div class="t sl" style="left:262.0px;top:554.6px"><b>7.2016-2017</b>学年校学习进步奖奖学金</div>
<div class="t sl" style="left:259.0px;top:599.6px"><b>1.</b>熟练掌握<b>AD</b>、<b>keil</b>、<b>IAR</b>等软件</div>
<div class="t sl" style="left:259.0px;top:631.6px"><b>2.</b>对<b>C</b>语言较为熟练，对<b>Verilog HDL</b>、<b>VB</b>、<b>C#</b>、汇编有一定理解</div>
<div class="t sl" style="left:259.0px;top:662.1px"><b>3.</b>对<b>C51</b>和<b>STM32</b>系列的单片机具有一定的应用能力</div>
<div class="t sl" style="left:259.0px;top:692.6px"><b>4.</b>参加过一些科研项目，具有独立思考的能力</div>
<div class="t sl" style="left:259.0px;top:723.6px"><b>5.</b>对嵌入式开发具有一定的了解，能够从事一些简单的操作</div>
<div class="t sl" style="left:259.0px;top:754.6px"><b>6.</b>英语理解能力较好</div>
<div class="t sl" style="left:72.0px;top:452.1px">奖惩情况：</div>
<div class="t sl" style="left:75.0px;top:674.0px">特长技能：</div>
<div class="t sl" style="left:1112.0px;top:16.9px">项目经历介绍</div>
<div class="t sl" style="left:1012.0px;top:79.6px"><b>2018.5-2019-5&nbsp;&nbsp;</b>担任大学生创新</div>
<div class="t sl" style="left:1012.0px;top:111.6px">创业校企合作项目<i style="display:inline-block;width:25.7px;font-style:normal;text-align:right">“</i>基于电导</div>
<div class="t sl" style="left:1012.0px;top:142.1px">率的地沟油检测<i style="display:inline-block;width:25.7px;font-style:normal;text-align:left">”</i>负责人（申</div>
<div class="t sl" style="left:1012.0px;top:173.1px">请发明专利三篇）</div>
<div class="t sl" style="left:1012.0px;top:205.6px">此项目主要是为了设计一款基</div>
<div class="t sl" style="left:1012.0px;top:237.1px">于单片机地沟油参数测量系统</div>
<div class="t sl" style="left:1012.0px;top:269.1px">控制器，同时对地沟油的各种</div>
<div class="t sl" style="left:1012.0px;top:301.1px">特征值建立神经网络算法的研</div>
<div class="t sl" style="left:1012.0px;top:332.4px">究。测量装置利用<b>STM32</b>系列</div>
<div class="t sl" style="left:1012.0px;top:364.6px">单片机，设计出一款智能化地</div>
<div class="t sl" style="left:1012.0px;top:395.6px">沟油参数测量装置。此外，通</div>
<div class="t sl" style="left:1012.0px;top:426.6px">过对地沟油的各种参数（电导</div>
<div class="t sl" style="left:1012.0px;top:457.6px">率、酸价、折光率等）进行分</div>
<div class="t sl" style="left:1012.0px;top:488.6px">析，建立神经网络进行分类识</div>
<div class="t sl" style="left:1012.0px;top:519.6px">别训练，并且在保持神经网络</div>
<div class="t sl" style="left:1012.0px;top:550.6px">识别率较高的情况下，保持模</div>
<div class="t sl" style="left:1012.0px;top:582.6px">型的持久化，在随机输入一组</div>
<div class="t sl" style="left:1012.0px;top:613.6px">未知油样的各种参数值的情况</div>
<div class="t sl" style="left:1012.0px;top:643.2px">下，能够各持识别结果。</div>
<svg style="left:440px;top:621px" width="40" height="4" viewBox="0 0 40 4"><path d="M0 2 l2.5-2 2.5 2 2.5-2 2.5 2 2.5-2 2.5 2 2.5-2 2.5 2 2.5-2 2.5 2 2.5-2 2.5 2 2.5-2 2.5 2 2.5-2 2.5 2" fill="none" stroke="#e04040" stroke-width="1"/></svg>

</div></div>
<svg style="left:40px;top:752px;filter:blur(0.9px)" width="250" height="145" viewBox="0 0 2048 1188">
<rect x="62" y="58" width="1886" height="1077" fill="#fff" stroke="#c6c6c6" stroke-width="10"/>
<text x="105" y="160" font-size="52" fill="#4a6470">淮阴工学院四年经历分享</text>
<rect x="575" y="288" width="395" height="317" fill="#1a7fa3"/>
<rect x="1005" y="288" width="395" height="317" fill="#bcd6ee"/>
<rect x="575" y="632" width="400" height="316" fill="#21a0cd"/>
<rect x="1005" y="632" width="395" height="316" fill="#00adef"/>
<text x="1197" y="505" text-anchor="middle" font-size="130" fill="#3a6bb8">工作</text><path d="M1080 512H1315" stroke="#3a6bb8" stroke-width="10"/>
<text x="772" y="505" text-anchor="middle" font-size="130" fill="#1c6fb0" opacity="0.6">学业</text>
<text x="772" y="848" text-anchor="middle" font-size="130" fill="#1c6fb0" opacity="0.7">学习</text><path d="M660 855H885" stroke="#1c6fb0" stroke-width="10" opacity="0.7"/>
<text x="1197" y="848" text-anchor="middle" font-size="130" fill="#1a5fb0" opacity="0.75">竞赛</text><path d="M1085 855H1310" stroke="#1a5fb0" stroke-width="10" opacity="0.75"/>
</svg>
<svg style="left:40px;top:910px;filter:blur(0.9px)" width="250" height="145" viewBox="0 0 2048 1188">
<rect x="62" y="58" width="1886" height="1072" fill="#fff" stroke="#c6c6c6" stroke-width="10"/>
<rect x="120" y="125" width="165" height="55" fill="#3c8aa8"/>
<rect x="125" y="238" width="135" height="25" fill="#c8c8c8"/>
<circle cx="828" cy="130" r="48" fill="#eef0f8" stroke="#6a7cb8" stroke-width="14"/>
<rect x="912" y="92" width="195" height="40" fill="#7080b8" opacity="0.8"/>
<rect x="910" y="155" width="225" height="22" fill="#9aa6cc" opacity="0.8"/>
<path d="M565 210H1370" stroke="#a8a8a8" stroke-width="12"/>
<rect x="775" y="284" width="395" height="22" fill="#b8b8b8"/>
<rect x="1240" y="368" width="125" height="16" fill="#b8bce0"/>
<rect x="565" y="420" width="70" height="22" fill="#888"/><rect x="645" y="424" width="140" height="16" fill="#d0d0d0"/>
<rect x="860" y="420" width="70" height="22" fill="#888"/><rect x="940" y="424" width="255" height="16" fill="#d0d0d0"/>
<rect x="610" y="490" width="715" height="475" fill="#fff" stroke="#9a9a9a" stroke-width="10"/>
<g stroke="#c8c8c8" stroke-width="6"><path d="M610 545H1325M610 597H1325M610 650H1325M610 700H1325M610 750H1325M610 800H1325M610 855H1325"/><path d="M725 490V965M1065 490V800M1185 490V800"/></g>
<g fill="#555"><rect x="830" y="505" width="140" height="22"/><rect x="860" y="558" width="70" height="22"/><rect x="835" y="610" width="115" height="22"/><rect x="865" y="662" width="60" height="20"/><rect x="865" y="712" width="60" height="20"/><rect x="805" y="762" width="170" height="22"/><rect x="1215" y="505" width="65" height="22"/><rect x="1215" y="558" width="65" height="22"/><rect x="1235" y="612" width="25" height="20"/><rect x="1235" y="662" width="25" height="20"/><rect x="1235" y="712" width="25" height="20"/><rect x="1235" y="765" width="25" height="20"/><rect x="1010" y="818" width="35" height="20"/><rect x="1010" y="870" width="35" height="20"/></g>
<g fill="#999"><rect x="630" y="505" width="75" height="20"/><rect x="630" y="558" width="75" height="20"/><rect x="630" y="610" width="75" height="20"/><rect x="630" y="662" width="75" height="20"/><rect x="630" y="712" width="75" height="20"/><rect x="630" y="765" width="75" height="20"/><rect x="630" y="818" width="75" height="20"/><rect x="630" y="895" width="75" height="22"/></g>
<path d="M1270 850L1090 885" stroke="#e04848" stroke-width="10"/>
<rect x="1265" y="825" width="225" height="40" fill="#f07878"/>
<rect x="790" y="908" width="210" height="16" fill="#e06060"/><rect x="1000" y="908" width="290" height="16" fill="#5a6ac0"/>
<rect x="1105" y="1020" width="220" height="20" fill="#aaa"/><rect x="1190" y="1062" width="115" height="18" fill="#b8b8b8"/>
</svg>
<svg style="left:40px;top:1066px;filter:blur(0.9px)" width="250" height="145" viewBox="0 0 2048 1188">
<rect x="62" y="62" width="1886" height="1077" fill="#fff" stroke="#c6c6c6" stroke-width="10"/>
<rect x="122" y="135" width="160" height="55" fill="#3c7a98"/>
<rect x="125" y="250" width="140" height="25" fill="#aaa"/>
<g fill="#c4c4c4"><rect x="318" y="250" width="1440" height="26"/><rect x="318" y="292" width="1420" height="26"/><rect x="318" y="332" width="1420" height="26"/><rect x="318" y="372" width="1440" height="26"/><rect x="318" y="425" width="1420" height="26"/></g>
<rect x="88" y="540" width="1835" height="65" fill="#1aa8de"/>
<rect x="705" y="540" width="150" height="65" fill="#137fb0"/>
<g fill="#bfe6f6"><rect x="195" y="562" width="55" height="18"/><rect x="290" y="562" width="130" height="18"/><rect x="465" y="562" width="90" height="18"/><rect x="600" y="562" width="85" height="18"/><rect x="730" y="562" width="95" height="18"/><rect x="875" y="562" width="90" height="18"/></g>
<rect x="180" y="630" width="1480" height="85" fill="#fdf3d6"/>
<rect x="200" y="650" width="1140" height="16" fill="#e8b060" opacity="0.7"/><rect x="200" y="685" width="730" height="16" fill="#e8b060" opacity="0.7"/>
<circle cx="1717" cy="660" r="14" fill="#3c9a5a"/><rect x="1702" y="755" width="30" height="30" fill="#888"/>
<circle cx="240" cy="795" r="20" fill="#6aa0e0"/>
<rect x="285" y="780" width="870" height="20" fill="#9aa0a8"/><rect x="285" y="815" width="80" height="16" fill="#888"/>
<rect x="285" y="850" width="215" height="8" fill="#ddd"/>
<rect x="285" y="888" width="80" height="20" fill="#777"/><rect x="285" y="925" width="490" height="18" fill="#aaa"/>
<circle cx="1413" cy="795" r="22" fill="#3cb070"/><rect x="1455" y="775" width="170" height="20" fill="#9aa0a8"/>
</svg>
<div class="a" style="left:10px;top:1215px;width:318px;height:68px;overflow:hidden"><svg style="left:-10px;top:0;filter:blur(0.9px)" width="340" height="75" viewBox="0 0 2048 452">
<rect x="285" y="100" width="1390" height="400" fill="#fff" stroke="#c6c6c6" stroke-width="7"/>
<rect x="330" y="150" width="200" height="40" fill="#4a8aa8"/>
<g fill="#c8c8c8"><rect x="480" y="215" width="1030" height="20"/><rect x="425" y="247" width="1080" height="20"/><rect x="425" y="280" width="1110" height="20"/><rect x="425" y="315" width="1110" height="20"/><rect x="425" y="345" width="1060" height="20"/><rect x="425" y="375" width="1110" height="20"/></g>
</svg></div>
<!-- ===== thumb2 lines overlay ===== -->
<div class="a" style="left:87px;top:602px;width:1.4px;height:131px;background:#6fa6dc"></div>
<div class="a" style="left:209.5px;top:602px;width:1.4px;height:131px;background:#6fa6dc"></div>
<div class="a" style="left:47.5px;top:662.5px;width:163px;height:1.4px;background:#6fa6dc"></div>
<div class="a" style="left:47.5px;top:699px;width:163px;height:1.4px;background:#6fa6dc"></div>

<!-- ===== right scrollbar ===== -->
<div class="a" style="left:2017px;top:422px;width:20px;height:722px;background:#dadada"></div>
<div class="a" style="left:2017px;top:422px;width:20px;height:20px;background:#fdfdfd;border:1px solid #d0d0d0"></div>
<svg style="left:2022px;top:428px" width="10" height="6" viewBox="0 0 10 6"><path d="M0 6h10L5 0z" fill="#6a6a6a"/></svg>
<div class="a" style="left:2017px;top:481px;width:20px;height:39px;background:#fdfdfd;border:1px solid #c8c8c8"></div>
<div class="a" style="left:2017px;top:1143px;width:20px;height:19px;background:#fdfdfd;border:1px solid #d0d0d0"></div>
<svg style="left:2022px;top:1149px" width="10" height="6" viewBox="0 0 10 6"><path d="M0 0h10L5 6z" fill="#6a6a6a"/></svg>
<svg style="left:2021px;top:1167px" width="12" height="40" viewBox="0 0 12 40"><path d="M1 2h10" stroke="#707070" stroke-width="1.5"/><path d="M1 9h10L6 3zM1 15h10L6 9z" fill="#707070"/><path d="M1 38h10" stroke="#707070" stroke-width="1.5"/><path d="M1 25h10L6 31zM1 31h10L6 37z" fill="#707070"/></svg>
<!-- notes scroll -->
<div class="a" style="left:2017px;top:1242px;width:20px;height:18px;background:#fdfdfd;border:1px solid #d0d0d0"></div>
<svg style="left:2022px;top:1248px" width="10" height="6" viewBox="0 0 10 6"><path d="M0 6h10L5 0z" fill="#6a6a6a"/></svg>
<div class="a" style="left:2017px;top:1262px;width:20px;height:19px;background:#fdfdfd;border:1px solid #d0d0d0"></div>
<svg style="left:2022px;top:1268px" width="10" height="6" viewBox="0 0 10 6"><path d="M0 0h10L5 6z" fill="#6a6a6a"/></svg>
<div class="t" style="left:351px;top:1252px;font-size:29px;color:#5c5c5c">单击此处添加备注</div>

<!-- ===== status bar ===== -->
<div class="t" style="left:17px;top:1289px;font-size:16px;color:#444">幻灯片 第 2 张，共 17 张</div>
<svg style="left:214px;top:1288px" width="20" height="17" viewBox="0 0 20 17"><path d="M1 1h8v15H1zM9 3l9-2v10l-9 5" fill="none" stroke="#666" stroke-width="1.3"/><path d="M12 12l5-7" stroke="#666" stroke-width="1.3"/></svg>
<div class="t" style="left:252px;top:1289px;font-size:16px;color:#444">中文(中国)</div>
<svg style="left:1459px;top:1289px" width="16" height="15" viewBox="0 0 16 15"><path d="M4 5l4-4 4 4z" fill="#666"/><path d="M1 8h14M1 11h14M1 14h14" stroke="#666" stroke-width="1.3"/></svg>
<div class="t" style="left:1481px;top:1289px;font-size:16px;color:#444">备注</div>
<svg style="left:1535px;top:1288px" width="16" height="17" viewBox="0 0 16 17"><path d="M1 1h14v10H8l-4 5v-5H1z" fill="#666"/></svg>
<div class="t" style="left:1555px;top:1289px;font-size:16px;color:#444">批注</div>
<div class="a" style="left:1609px;top:1284px;width:42px;height:27px;background:#c8c8c8"></div>
<svg style="left:1621px;top:1289px" width="17" height="16" viewBox="0 0 17 16"><path d="M1 1h15v14H1zM4 1v14M7 4h6v5H7z" fill="none" stroke="#777" stroke-width="1.3"/></svg>
<svg style="left:1664px;top:1289px" width="17" height="16" viewBox="0 0 17 16"><path d="M1 1h6v5H1zM10 1h6v5h-6zM1 10h6v5H1zM10 10h6v5h-6z" fill="none" stroke="#777" stroke-width="1.3"/></svg>
<svg style="left:1708px;top:1289px" width="16" height="16" viewBox="0 0 16 16"><path d="M1 2l7 2 7-2v12l-7 2-7-2zM8 4v12M3 6h3M3 9h3M10 6h3M10 9h3" fill="none" stroke="#777" stroke-width="1.3"/></svg>
<svg style="left:1751px;top:1290px" width="16" height="15" viewBox="0 0 16 15"><path d="M1 1h14M2 1v7h12V1M8 8v5M5 14h6" fill="none" stroke="#777" stroke-width="1.3"/><path d="M5 4h6" stroke="#777"/></svg>

<!-- ===== sogou IME bar ===== -->
<div class="a" style="left:1780px;top:1280px;width:258px;height:31px;background:#fdfdfd"></div>
<svg style="left:1766px;top:1274px" width="42" height="40" viewBox="0 0 42 40"><g transform="rotate(-14 21 20)"><rect x="4" y="4" width="34" height="32" rx="5" fill="#e9581f"/><path d="M31 12c-4-3-14-3-17 0s0 6 6 7 9 3 6 6-12 2-17 0" fill="none" stroke="#fff" stroke-width="5.5" stroke-linecap="round"/></g></svg>
<svg style="left:1812px;top:1286px" width="20" height="21" viewBox="0 0 20 21"><path d="M2 5h16v9H2z" fill="none" stroke="#2a78cc" stroke-width="3"/><path d="M10 0v21" stroke="#2a78cc" stroke-width="3"/></svg>
<svg style="left:1843px;top:1288px" width="17" height="17" viewBox="0 0 17 17"><circle cx="4" cy="4" r="2.3" fill="none" stroke="#2a78cc" stroke-width="1.6"/><path d="M12 9c2 0 3 1 3 3 0 2-2 4-4 5" fill="none" stroke="#2a78cc" stroke-width="3"/><circle cx="12.5" cy="10.5" r="2.2" fill="#2a78cc"/></svg>
<svg style="left:1868px;top:1286px" width="22" height="22" viewBox="0 0 22 22"><circle cx="11" cy="11" r="9.5" fill="none" stroke="#2a78cc" stroke-width="2"/><circle cx="7.5" cy="8.5" r="1.3" fill="#2a78cc"/><circle cx="14.5" cy="8.5" r="1.3" fill="#2a78cc"/><path d="M6 13c2 3 8 3 10 0" fill="none" stroke="#2a78cc" stroke-width="1.8"/></svg>
<svg style="left:1900px;top:1285px" width="17" height="23" viewBox="0 0 17 23"><rect x="4.5" y="0" width="8" height="14" rx="4" fill="#2a78cc"/><path d="M1.5 10a7 7 0 0 0 14 0" fill="none" stroke="#2a78cc" stroke-width="2"/><path d="M8.5 17v5M5 22h7" stroke="#2a78cc" stroke-width="2"/></svg>
<svg style="left:1926px;top:1288px" width="22" height="17" viewBox="0 0 22 17"><rect x="1" y="1" width="20" height="15" rx="2" fill="none" stroke="#2a78cc" stroke-width="2"/><g fill="#2a78cc"><rect x="4" y="4" width="2" height="2"/><rect x="8" y="4" width="2" height="2"/><rect x="12" y="4" width="2" height="2"/><rect x="16" y="4" width="2" height="2"/><rect x="4" y="8" width="2" height="2"/><rect x="8" y="8" width="2" height="2"/><rect x="12" y="8" width="2" height="2"/><rect x="16" y="8" width="2" height="2"/><rect x="6" y="12" width="10" height="1.6"/></g></svg>
<svg style="left:1956px;top:1286px" width="25" height="21" viewBox="0 0 25 21"><circle cx="8" cy="5" r="4" fill="#c4c8d0"/><path d="M1 20c0-6 3-9 7-9s6 2 7 4" fill="#c4c8d0"/><path d="M11 12h13v8H11z" fill="none" stroke="#c4c8d0" stroke-width="1.4"/></svg>
<svg style="left:1985px;top:1286px" width="19" height="20" viewBox="0 0 19 20"><path d="M6 1l-5 3 2 5 2-1v11h9V8l2 1 2-5-5-3c-1 2-6 2-7 0z" fill="#2a78cc"/></svg>
<svg style="left:2013px;top:1286px" width="19" height="19" viewBox="0 0 19 19"><rect x="0" y="10" width="8" height="8" fill="#2a78cc"/><rect x="10" y="10" width="8" height="8" fill="#2a78cc"/><rect x="0" y="0" width="8" height="8" fill="#2a78cc"/><rect x="10.8" y="0.8" width="6.4" height="6.4" fill="#fff" stroke="#2a78cc" stroke-width="1.6"/></svg>
</body></html>
